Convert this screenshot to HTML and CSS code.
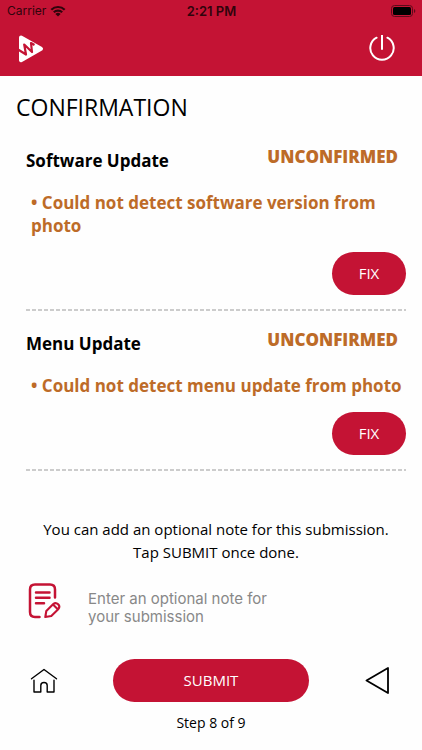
FILE: index.html
```html
<!DOCTYPE html>
<html lang="en">
<head>
<meta charset="utf-8">
<meta name="viewport" content="width=device-width, initial-scale=1">
<title>Confirmation</title>
<link rel="stylesheet" href="styles.css">
</head>
<body>
<header class="top">
  <div class="status">
    <div class="carrier">
      <span>Carrier</span>
      <svg width="16" height="12" viewBox="0 0 16 12" aria-hidden="true">
        <path d="M1.3 4.7A9.6 9.6 0 0 1 14.7 4.7M3.8 7.3A6 6 0 0 1 12.2 7.3" fill="none" stroke="currentColor" stroke-width="2.2"/>
        <path d="M8 11.6 5.4 9A3.7 3.7 0 0 1 10.6 9Z" fill="currentColor"/>
      </svg>
    </div>
    <span class="time">2:21 PM</span>
    <svg class="battery" width="25" height="12" viewBox="0 0 25 12" aria-hidden="true">
      <rect x=".5" y=".5" width="21" height="11" rx="3" fill="none" stroke="#5c0a1a"/>
      <rect x="2" y="2" width="18" height="8" rx="1.5" fill="#000"/>
      <path d="M23 4v4q1.3-.6 1.3-2T23 4z" fill="#5c0a1a"/>
    </svg>
  </div>
  <div class="bar">
    <a class="logo" href="#" aria-label="Start page">
      <svg width="25" height="28" viewBox="0 0 25 28" aria-hidden="true">
        <path d="M2 2.5 22 13.700 2 25.200Z" fill="#fff" stroke="#fff" stroke-width="4" stroke-linejoin="round"/>
        <path d="M-1 14.500 7 19.500 5.200 9.500 13 17 12 8 15.500 10" fill="none" stroke="#c41334" stroke-width="2.200" stroke-linejoin="round"/>
      </svg>
    </a>
    <button class="icon-button" type="button" aria-label="Log out">
      <svg width="28" height="28" viewBox="0 0 28 28" fill="none" stroke="#fff" stroke-width="2" stroke-linecap="round" aria-hidden="true">
        <path d="M14 0V14M8.600 2.700A11.700 11.700 0 1 0 19.400 2.700"/>
      </svg>
    </button>
  </div>
</header>
<main class="page">
  <h1>CONFIRMATION</h1>
  <section class="item">
    <div class="item-head">
      <h2>Software Update</h2>
      <strong class="state">UNCONFIRMED</strong>
    </div>
    <p class="issue">• Could not detect software version from photo</p>
    <button class="pill fix" type="button">FIX</button>
  </section>
  <section class="item">
    <div class="item-head">
      <h2>Menu Update</h2>
      <strong class="state">UNCONFIRMED</strong>
    </div>
    <p class="issue">• Could not detect menu update from photo</p>
    <button class="pill fix" type="button">FIX</button>
  </section>
  <p class="hint">You can add an optional note for this submission. Tap SUBMIT once done.</p>
  <div class="note">
    <label for="note" aria-label="Optional note">
      <svg width="34" height="36" viewBox="0 0 34 36" fill="none" stroke="#c41334" stroke-width="2.500" stroke-linecap="round" stroke-linejoin="round" aria-hidden="true">
        <path d="M11.500 34H7Q2 34 2 29V6.500Q2 1.500 7 1.500H22Q27 1.500 27 6.500V14.500M8 9.500H21.500M8 14.800H21.500M8 20.200H16"/>
        <path d="M17.300 34 18.300 28 25.300 21Q27.700 19 30.200 21.300 32.500 23.800 30.200 26.300L23.300 33ZM26 22.500 29 25.500" stroke-width="2.100"/>
      </svg>
    </label>
    <textarea id="note" rows="2" placeholder="Enter an optional note for your submission"></textarea>
  </div>
</main>
<footer class="bottom">
  <nav class="actions">
    <a class="icon-button" href="#" aria-label="Home">
      <svg width="28" height="28" viewBox="0 0 28 28" fill="none" stroke="#000" stroke-width="1.400" stroke-linecap="round" stroke-linejoin="round" aria-hidden="true">
        <path d="M1.500 11.800 14 2.500 26.500 11.800M4 13.300V25H10.800V18.500Q10.800 15.500 14 15.500T17.200 18.500V25H24V13.300"/>
      </svg>
    </a>
    <button class="pill submit" type="submit">SUBMIT</button>
    <button class="icon-button" type="button" aria-label="Back">
      <svg width="28" height="28" viewBox="0 0 28 28" fill="none" stroke="#000" stroke-width="1.800" stroke-linejoin="round" aria-hidden="true">
        <path d="M2.500 13.500 24 1V26Z"/>
      </svg>
    </button>
  </nav>
  <p class="step">Step 8 of 9</p>
</footer>
</body>
</html>
```
FILE: styles.css
```css
:root {
  --red: #c41334;
  --amber: #bd6b28;
}

* {
  box-sizing: border-box;
}

body {
  margin: 0;
  min-height: 100vh;
  display: flex;
  flex-direction: column;
  background: #fefefe;
  color: #000;
  font: 15px/23px "Open Sans", "Noto Sans", sans-serif;
}

h1,
h2,
p {
  margin: 0;
}

svg {
  display: block;
}

button {
  border: 0;
  padding: 0;
  background: none;
  font: inherit;
  cursor: pointer;
}

.top {
  background: var(--red);
}

.status {
  display: grid;
  grid-template-columns: 1fr auto 1fr;
  align-items: center;
  height: 22px;
  padding: 0 6px 0 7px;
  color: #30040c;
  font: 12px/22px Inter, sans-serif;
}

.carrier {
  display: flex;
  align-items: center;
  gap: 4px;
}

.time {
  font-size: 13px;
  font-weight: 600;
}

.battery {
  justify-self: end;
}

.bar {
  display: flex;
  justify-content: space-between;
  align-items: center;
  height: 54px;
  padding: 0 26px 0 19px;
}

.icon-button {
  display: block;
}

.page {
  flex: 1;
  padding: 16px 16px 6px;
}

h1 {
  font-size: 23px;
  font-weight: 400;
  line-height: 30px;
}

.item {
  display: flex;
  flex-direction: column;
  margin-left: 10px;
  padding-bottom: 16px;
  background: repeating-linear-gradient(90deg, #ccc 0 4px, transparent 4px 6px) bottom / 100% 2px no-repeat;
}

h1 + .item {
  margin-top: 6px;
}

.item-head {
  display: flex;
  justify-content: space-between;
  padding: 17px 8px 0 0;
}

h2 {
  padding-top: 4px;
  font-size: 17px;
  font-weight: 700;
  line-height: 23px;
}

.state {
  color: var(--amber);
  font-size: 17px;
  font-weight: 800;
}

.issue {
  padding: 19px 0 0 5px;
  color: var(--amber);
  font-size: 17px;
  font-weight: 700;
}

.pill {
  height: 43px;
  border-radius: 22px;
  background: var(--red);
  color: #fff;
}

.fix {
  align-self: flex-end;
  width: 74px;
  margin-top: 15px;
}

.hint {
  max-width: 380px;
  margin: 47px auto 0;
  padding-left: 10px;
  text-align: center;
}

.note {
  display: flex;
  gap: 24px;
  margin-top: 19px;
  padding-left: 12px;
}

textarea {
  width: 200px;
  height: 44px;
  margin-top: 7px;
  padding: 0 0 0 2px;
  border: 0;
  background: none;
  resize: none;
  font: 15px/18px Inter, sans-serif;
}

textarea::placeholder {
  color: #888;
}

.bottom {
  padding: 0 30px 16px;
}

.actions {
  display: flex;
  justify-content: space-between;
  align-items: center;
}

.submit {
  width: 196px;
}

.step {
  padding-top: 10px;
  font-size: 14px;
  line-height: 22px;
  text-align: center;
}
```
